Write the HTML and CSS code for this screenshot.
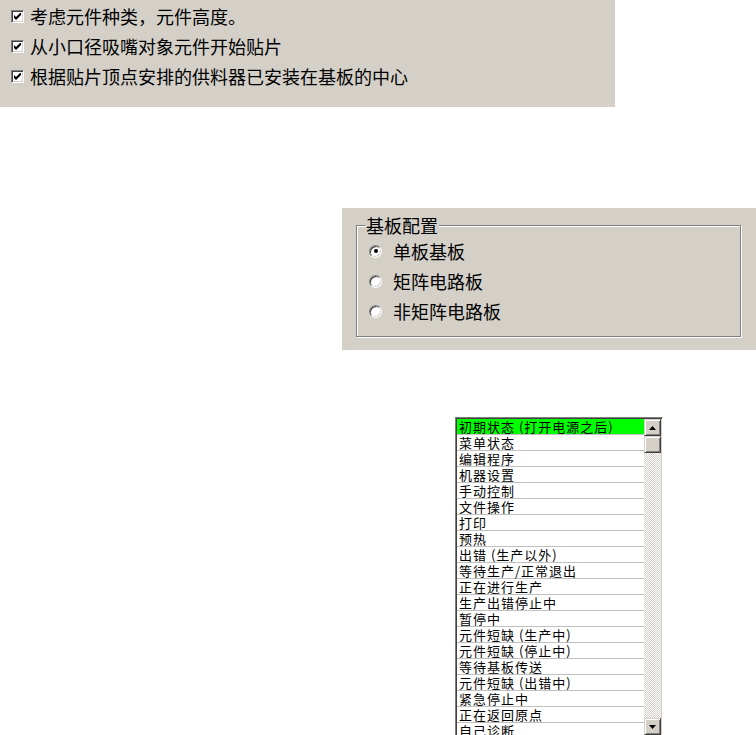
FILE: index.html
```html
<!DOCTYPE html>
<html lang="zh-CN">
<head>
    <meta charset="UTF-8">
    <title>设置</title>
    <link rel="stylesheet" href="styles.css">
</head>
<body>
    <div class="options">
        <label class="check-row"><span class="checkbox"><svg width="7" height="7" viewBox="0 0 7 7"><path d="M0 2v3l2 2 5-5V-1L2 4z" fill="#000"/></svg></span>考虑元件种类，元件高度。</label>
        <label class="check-row"><span class="checkbox"><svg width="7" height="7" viewBox="0 0 7 7"><path d="M0 2v3l2 2 5-5V-1L2 4z" fill="#000"/></svg></span>从小口径吸嘴对象元件开始贴片</label>
        <label class="check-row"><span class="checkbox"><svg width="7" height="7" viewBox="0 0 7 7"><path d="M0 2v3l2 2 5-5V-1L2 4z" fill="#000"/></svg></span>根据贴片顶点安排的供料器已安装在基板的中心</label>
    </div>

    <div class="board-panel">
        <fieldset class="group">
            <legend>基板配置</legend>
            <label class="radio-row"><span class="radio selected"></span>单板基板</label>
            <label class="radio-row"><span class="radio"></span>矩阵电路板</label>
            <label class="radio-row"><span class="radio"></span>非矩阵电路板</label>
        </fieldset>
    </div>

    <div class="listbox">
        <ul class="items">
            <li class="active">初期状态 (打开电源之后)</li>
            <li>菜单状态</li>
            <li>编辑程序</li>
            <li>机器设置</li>
            <li>手动控制</li>
            <li>文件操作</li>
            <li>打印</li>
            <li>预热</li>
            <li>出错 (生产以外)</li>
            <li>等待生产/正常退出</li>
            <li>正在进行生产</li>
            <li>生产出错停止中</li>
            <li>暂停中</li>
            <li>元件短缺 (生产中)</li>
            <li>元件短缺 (停止中)</li>
            <li>等待基板传送</li>
            <li>元件短缺 (出错中)</li>
            <li>紧急停止中</li>
            <li>正在返回原点</li>
            <li>自己诊断</li>
        </ul>
        <div class="scrollbar">
            <div class="btn">
                <svg width="7" height="4" viewBox="0 0 7 4"><polygon points="3.5,0 7,4 0,4" fill="#000"/></svg>
            </div>
            <div class="btn thumb"></div>
            <div class="track"></div>
            <div class="btn">
                <svg width="7" height="4" viewBox="0 0 7 4"><polygon points="0,0 7,0 3.5,4" fill="#000"/></svg>
            </div>
        </div>
    </div>
</body>
</html>
```

FILE: styles.css
```css
body {
    margin: 0;
    height: 735px;
    overflow: hidden;
    background: #fff;
    font-family: "Noto Sans CJK SC", "Noto Sans", sans-serif;
    color: #000;
}

/* top check options */
.options {
    width: 615px;
    height: 106px;
    padding-top: 1px;
    background: #d4d0c8;
    font-size: 18px;
}
.check-row {
    display: flex;
    align-items: center;
    height: 30px;
    padding-left: 11px;
}
.checkbox {
    flex: none;
    box-sizing: border-box;
    width: 13px;
    height: 13px;
    margin-right: 6px;
    display: flex;
    align-items: center;
    justify-content: center;
    background: #fff;
    border: 1px solid;
    border-color: #808080 #fff #fff #808080;
    box-shadow: inset 1px 1px #404040, inset -1px -1px #d4d0c8;
}

/* board config group */
.board-panel {
    margin: 101px 0 0 342px;
    width: 414px;
    height: 142px;
    box-sizing: border-box;
    padding: 8px 0 0 14px;
    background: #d4d0c8;
    font-size: 18px;
}
.group {
    width: 385px;
    height: 121px;
    box-sizing: border-box;
    margin: 0;
    padding: 0;
    border: 1px solid #808080;
    box-shadow: inset 1px 1px #fff, 1px 1px #fff;
}
.group legend {
    margin-left: 8px;
    padding: 0 1px;
    background: #d4d0c8;
    line-height: 18px;
}
.radio-row {
    display: flex;
    align-items: center;
    height: 30px;
    padding-left: 12px;
}
.radio-row:first-of-type {
    margin-top: 2px;
}
.radio {
    flex: none;
    box-sizing: border-box;
    width: 13px;
    height: 13px;
    margin-right: 11px;
    border-radius: 50%;
    background: #fff;
    border: 1px solid;
    border-color: #808080 #fff #fff #808080;
    box-shadow: inset 1px 1px #404040, inset -1px -1px #d4d0c8;
    position: relative;
}
.radio.selected::after {
    content: "";
    position: absolute;
    left: 3.5px;
    top: 3.5px;
    width: 4px;
    height: 4px;
    border-radius: 50%;
    background: #000;
}

/* state list */
.listbox {
    display: flex;
    margin: 67px 0 0 455px;
    width: 208px;
    height: 320px;
    box-sizing: border-box;
    border: 1px solid;
    border-color: #808080 #fff #fff #808080;
    box-shadow: inset 1px 1px #404040, inset -1px -1px #d4d0c8;
    padding: 1px;
    background: #fff;
}
.items {
    list-style: none;
    margin: 0;
    padding: 0;
    flex: 1;
    overflow: hidden;
    font-size: 13px;
    letter-spacing: 1px;
}
.items li {
    height: 15px;
    line-height: 15px;
    padding-left: 2px;
    border-bottom: 1px solid #c0c0c0;
    white-space: nowrap;
}
.items li.active {
    background: #00ff00;
}
.scrollbar {
    display: flex;
    flex-direction: column;
    width: 17px;
}
.btn {
    box-sizing: border-box;
    height: 17px;
    display: flex;
    align-items: center;
    justify-content: center;
    background: #d4d0c8;
    border: 1px solid;
    border-color: #d4d0c8 #404040 #404040 #d4d0c8;
    box-shadow: inset 1px 1px #fff, inset -1px -1px #808080;
}
.track {
    flex: 1;
    background: repeating-conic-gradient(#fff 0 25%, #d4d0c8 0 50%) 0 0 / 2px 2px;
}
```
